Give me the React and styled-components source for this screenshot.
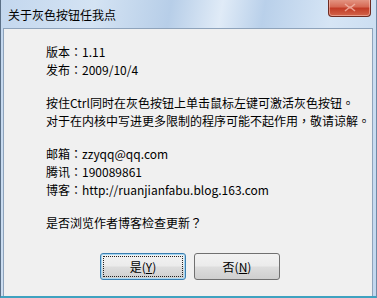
import React from "react"
import styled, { createGlobalStyle } from "styled-components"

const GlobalStyle = createGlobalStyle`
  html, body {
    margin: 0;
    padding: 0;
    background: #ffffff;
  }
  body {
    font-family: "Noto Sans CJK SC", "Noto Sans", sans-serif;
  }
`

const Window = styled.div`
  width: 377px;
  height: 298px;
  box-sizing: border-box;
  display: flex;
  flex-direction: column;
  overflow: hidden;
  position: relative;
  background: linear-gradient(100deg, #c3d7ee 0%, #d4e3f3 22%, #b7cee8 40%, #e0ebf7 52%, #b9d0ea 62%, #d6e5f5 78%, #c2d7ee 100%);
  border-left: 1px solid #5a6f86;
  border-bottom: 2px solid #3fa2c0;
  border-right: 1px solid #6f8aa6;
`

const TitleBar = styled.div`
  height: 28px;
  flex-shrink: 0;
  display: flex;
  align-items: center;
  padding-left: 7px;
  font-size: 12px;
  color: #000;
`

const CloseButton = styled.div`
  position: absolute;
  top: -1px;
  right: 5px;
  width: 43px;
  height: 18px;
  border: 1px solid #6e2b22;
  border-top: none;
  border-radius: 0 0 4px 4px;
  background: linear-gradient(180deg, #e59a88 0%, #d66a55 45%, #c23c27 55%, #d2644a 100%);
  box-shadow: inset 0 0 0 1px rgba(255, 210, 200, 0.5);
  display: flex;
  align-items: center;
  justify-content: center;
  box-sizing: border-box;
`

const Client = styled.div`
  flex: 1;
  margin: 0 3px 0 2px;
  background: #f0f0f0;
  border: 1px solid #8ea3bb;
  border-bottom: none;
  padding: 14px 0 0 42px;
  display: flex;
  flex-direction: column;
`

const Line = styled.div`
  font-size: 12px;
  line-height: 18px;
  height: 18px;
  color: #000;
  white-space: nowrap;
  margin-top: ${(p) => (p.$gap ? "15px" : "0")};
`

const Punct = styled.span`
  font-family: "Noto Sans CJK TC", "Noto Sans CJK SC", sans-serif;
`

const ButtonRow = styled.div`
  display: flex;
  gap: 8px;
  margin-top: 21px;
  margin-left: 54px;
`

const Button = styled.div`
  width: 86px;
  height: 27px;
  box-sizing: border-box;
  border-radius: 3px;
  border: 1px solid ${(p) => (p.$default ? "#3c7fb1" : "#707070")};
  background: linear-gradient(180deg, #f2f2f2 0%, #ebebeb 48%, #dddddd 52%, #cfcfcf 100%);
  display: flex;
  align-items: center;
  justify-content: center;
  font-size: 12px;
  color: #000;
  position: relative;
  ${(p) =>
    p.$default &&
    `
    box-shadow: inset 0 0 0 1px #a6d7f2;
    &::after {
      content: "";
      position: absolute;
      inset: 2px;
      border: 1px dotted #222;
      border-radius: 1px;
    }
  `}
`

const Key = styled.span`
  text-decoration: underline;
`

export default function App() {
  return (
    <>
      <GlobalStyle />
      <Window>
        <TitleBar>关于灰色按钮任我点</TitleBar>
        <CloseButton>
          <svg width="14" height="9" viewBox="0 0 14 9">
            <path d="M2 1 L7 5 L12 1 M2 8 L7 4 L12 8" stroke="#f2b8aa" strokeWidth="1.6" fill="none" opacity="0.8" />
          </svg>
        </CloseButton>
        <Client>
          <Line>版本<Punct>：</Punct>1.11</Line>
          <Line>发布<Punct>：</Punct>2009/10/4</Line>
          <Line $gap>按住Ctrl同时在灰色按钮上单击鼠标左键可激活灰色按钮<Punct>。</Punct></Line>
          <Line>对于在内核中写进更多限制的程序可能不起作用<Punct>，</Punct>敬请谅解<Punct>。</Punct></Line>
          <Line $gap>邮箱<Punct>：</Punct>zzyqq@qq.com</Line>
          <Line>腾讯<Punct>：</Punct>190089861</Line>
          <Line>博客<Punct>：</Punct>http://ruanjianfabu.blog.163.com</Line>
          <Line $gap>是否浏览作者博客检查更新<Punct>？</Punct></Line>
          <ButtonRow>
            <Button $default>
              是(<Key>Y</Key>)
            </Button>
            <Button>
              否(<Key>N</Key>)
            </Button>
          </ButtonRow>
        </Client>
      </Window>
    </>
  )
}
